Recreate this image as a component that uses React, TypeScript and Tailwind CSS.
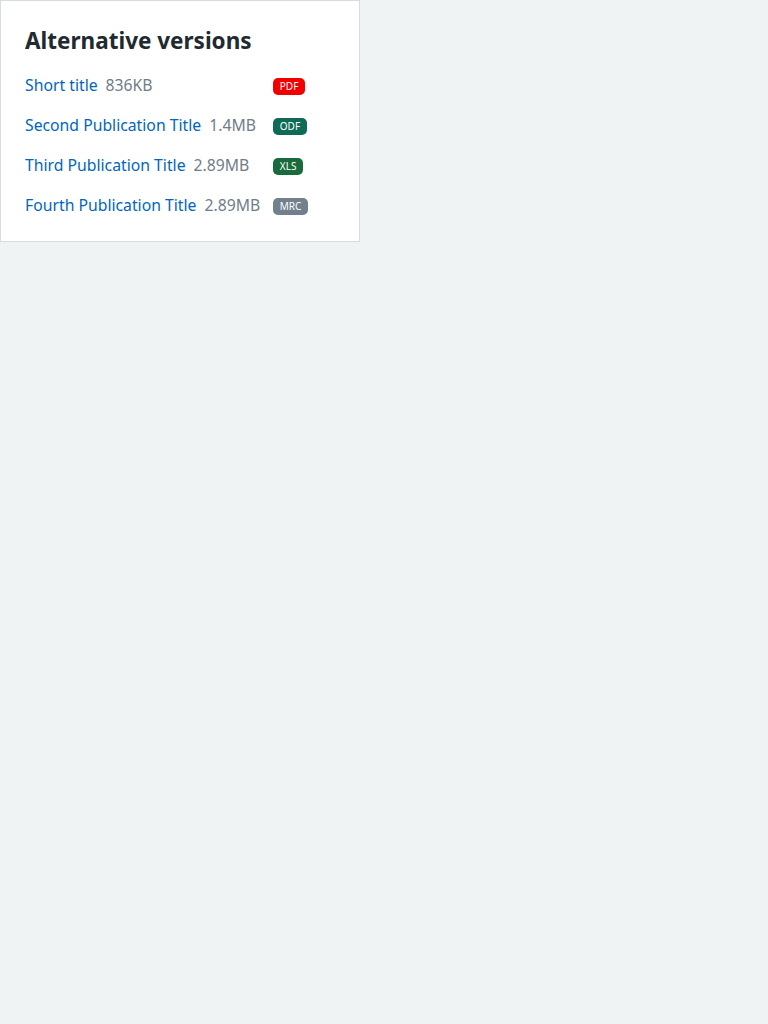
import React from 'react';

const versions = [
  { title: 'Short title', size: '836KB', type: 'PDF', badge: 'bg-[#f20000]' },
  { title: 'Second Publication Title', size: '1.4MB', type: 'ODF', badge: 'bg-[#0f6b57]' },
  { title: 'Third Publication Title', size: '2.89MB', type: 'XLS', badge: 'bg-[#1a6b3c]' },
  { title: 'Fourth Publication Title', size: '2.89MB', type: 'MRC', badge: 'bg-[#727f8c]' },
];

export default function App() {
  return (
    <div className="min-h-screen bg-[#eff3f4] font-['Noto_Sans',sans-serif]">
      <div className="w-[360px] border border-[#d6dcdf] bg-white px-6 pt-[22px] pb-[15px]">
        <h2 className="text-[22.5px] font-bold leading-[36px] text-[#212a31]">Alternative versions</h2>
        <div className="mt-[7px] grid grid-cols-[auto_1fr] gap-x-[13px]">
          {versions.map((v) => (
            <React.Fragment key={v.type}>
              <div className="flex h-10 items-center gap-2 text-[15.75px]">
                <a href="#" className="text-[#0065bd]">{v.title}</a>
                <span className="text-[#6f7d8a]">{v.size}</span>
              </div>
              <div className="flex h-10 items-center">
                <span className={`${v.badge} rounded-[5px] px-[6.5px] text-[10px] leading-[17px] text-white`}>{v.type}</span>
              </div>
            </React.Fragment>
          ))}
        </div>
      </div>
    </div>
  );
}
